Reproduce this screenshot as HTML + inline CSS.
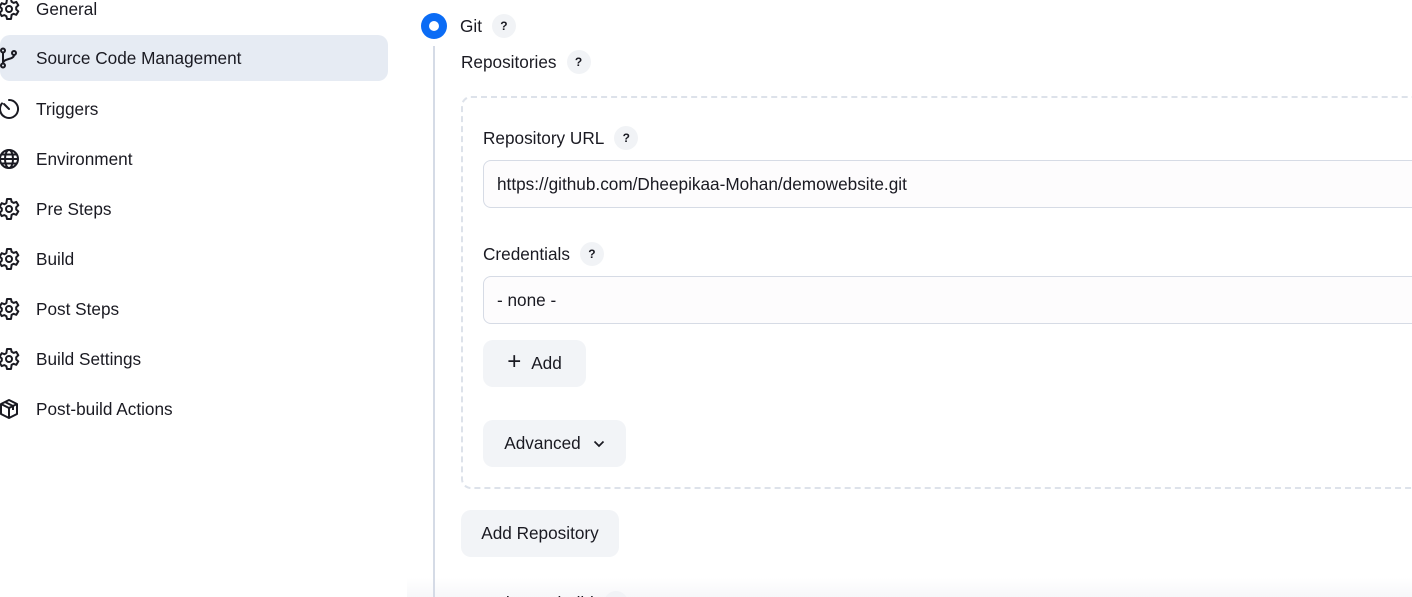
<!DOCTYPE html>
<html><head><style>
*{margin:0;padding:0;box-sizing:border-box}
html,body{width:1412px;height:597px;overflow:hidden}
body{background:#fff;font-family:"Liberation Sans",sans-serif;color:#1a1a22;position:relative;font-size:17.2px}
.a{position:absolute}
.item{position:absolute;left:0;height:46px;width:388px;display:flex;align-items:center;border-radius:10px}
.item svg{position:absolute;left:-3px;width:24px;height:24px}
.item span{position:absolute;left:36px}
.q{display:inline-flex;align-items:center;justify-content:center;width:24px;height:24px;border-radius:50%;background:#f1f3f6;font-size:12px;font-weight:bold;margin-left:10px;vertical-align:middle}
.lbl{position:absolute;display:flex;align-items:center}
.inp{position:absolute;left:483px;width:1000px;height:48px;border:1px solid #d6dbe5;border-radius:8px;background:#fdfcfd;padding-left:13px;display:flex;align-items:center}
.btn{position:absolute;background:#f2f4f7;border-radius:10px;display:flex;align-items:center;justify-content:center;height:47px}
</style></head><body>
<svg width="0" height="0" style="position:absolute"><defs>
<g id="gear" fill="none" stroke="#1a1a22" stroke-width="2" stroke-linejoin="round"><path d="M10 2h4l.6 2.8 2 1.1 2.7-1 2 3.4-2.1 1.9v2.3l2.1 1.9-2 3.4-2.7-1-2 1.1L14 22h-4l-.6-2.8-2-1.1-2.7 1-2-3.4 2.1-1.9V11.5L2.7 9.6l2-3.4 2.7 1 2-1.1z"/><circle cx="12" cy="12" r="3"/></g>
</defs></svg>
<div class="item" style="top:-14px"><svg viewBox="0 0 24 24"><use href="#gear"/></svg><span>General</span></div>
<div class="item" style="top:35px;background:#e6ebf3"><svg viewBox="0 0 24 24" fill="none" stroke="#1a1a22" stroke-width="2"><circle cx="6" cy="4.5" r="2"/><circle cx="6" cy="19.5" r="2"/><circle cx="17" cy="7" r="2"/><path d="M6 6.5v11M17 9c0 5-11 3-11 8.5"/></svg><span>Source Code Management</span></div>
<div class="item" style="top:86px"><svg viewBox="0 0 24 24" fill="none" stroke="#1a1a22" stroke-width="2" stroke-linecap="round"><path d="M12 3a9 9 0 1 1-7 3.4"/><path d="M7 7l5 5"/></svg><span>Triggers</span></div>
<div class="item" style="top:136px"><svg viewBox="0 0 24 24" fill="none" stroke="#1a1a22" stroke-width="2"><circle cx="12" cy="12" r="9"/><ellipse cx="12" cy="12" rx="4" ry="9"/><path d="M3 12h18M4.5 7.5h15M4.5 16.5h15"/></svg><span>Environment</span></div>
<div class="item" style="top:186px"><svg viewBox="0 0 24 24"><use href="#gear"/></svg><span>Pre Steps</span></div>
<div class="item" style="top:236px"><svg viewBox="0 0 24 24"><use href="#gear"/></svg><span>Build</span></div>
<div class="item" style="top:286px"><svg viewBox="0 0 24 24"><use href="#gear"/></svg><span>Post Steps</span></div>
<div class="item" style="top:336px"><svg viewBox="0 0 24 24"><use href="#gear"/></svg><span>Build Settings</span></div>
<div class="item" style="top:386px"><svg viewBox="0 0 24 24" fill="none" stroke="#1a1a22" stroke-width="2" stroke-linejoin="round"><path d="M12 3l8 4v10l-8 4-8-4V7z"/><path d="M4 7l8 4 8-4M12 11v10M8 5l8 4v4"/></svg><span>Post-build Actions</span></div>

<div class="a" style="left:421px;top:13px;width:26px;height:26px;border-radius:50%;background:#0b6cf5"></div>
<div class="a" style="left:429px;top:21px;width:10px;height:10px;border-radius:50%;background:#fff"></div>
<div class="a" style="left:433px;top:46px;width:2px;height:560px;background:#d5dbe6"></div>
<div class="lbl" style="left:460px;top:14px">Git<span class="q">?</span></div>
<div class="lbl" style="left:461px;top:50px">Repositories<span class="q">?</span></div>
<div class="a" style="left:461px;top:96px;width:1000px;height:393px;border:2px dashed #dde2ea;border-radius:10px"></div>
<div class="lbl" style="left:483px;top:126px">Repository URL<span class="q">?</span></div>
<div class="inp" style="top:160px">https://github.com/Dheepikaa-Mohan/demowebsite.git</div>
<div class="lbl" style="left:483px;top:242px">Credentials<span class="q">?</span></div>
<div class="inp" style="top:276px">- none -</div>
<div class="btn" style="left:483px;top:340px;width:103px"><span style="font-size:24px;font-weight:300;margin-right:10px;margin-top:-3px">+</span>Add</div>
<div class="btn" style="left:483px;top:420px;width:143px">Advanced<svg width="12" height="8" viewBox="0 0 12 8" style="margin-left:12px" fill="none" stroke="#1a1a22" stroke-width="1.7"><path d="M1.5 1.5l4.5 4.5 4.5-4.5"/></svg></div>
<div class="btn" style="left:461px;top:510px;width:158px">Add Repository</div>
<div class="a" style="left:407px;top:578px;width:1005px;height:20px;background:linear-gradient(#fff,#f6f7f9)"></div>
<div class="a" style="left:433px;top:578px;width:2px;height:20px;background:#d5dbe6"></div>
<div class="lbl" style="left:461px;top:591px">Branches to build<span class="q">?</span></div>
</body></html>
